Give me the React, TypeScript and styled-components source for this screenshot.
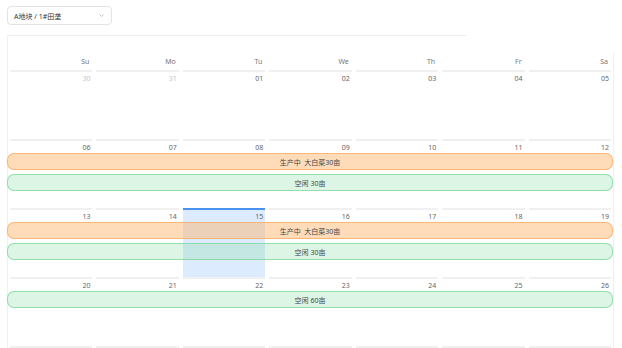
import styled, { createGlobalStyle } from "styled-components";

const GlobalStyle = createGlobalStyle`
  body {
    margin: 0;
    background: #fff;
    font-family: "Noto Sans", "Noto Sans CJK SC", sans-serif;
    color: rgba(0, 0, 0, 0.88);
  }
`;

const Page = styled.div`
  width: 622px;
  height: 348px;
  overflow: hidden;
  padding: 6px 0 0 7px;
  box-sizing: border-box;
`;

const Select = styled.div`
  width: 105px;
  height: 19px;
  box-sizing: border-box;
  border: 1px solid #e3e3e3;
  border-radius: 4px;
  display: flex;
  align-items: center;
  justify-content: space-between;
  padding: 0 6px 0 6px;
  font-size: 7px;
  color: #333;
`;

const Frame = styled.div`
  margin-top: 10px;
  border-left: 1px solid #f0f0f0;
`;

const TopRule = styled.div`
  width: 458px;
  height: 17px;
  border-top: 1px solid #ececec;
  box-sizing: border-box;
`;

const Month = styled.div`
  width: 605px;
  border-right: 1px solid #f0f0f0;
`;

const Grid = styled.div`
  display: grid;
  grid-template-columns: repeat(7, 1fr);
`;

const HeadCell = styled.div`
  height: 18px;
  box-sizing: border-box;
  padding: 2px 5px 0 0;
  line-height: 16px;
  text-align: right;
  font-size: 7px;
  color: #777;
`;

const Week = styled.div`
  display: grid;
  grid-template-columns: repeat(7, 1fr);
  grid-template-rows: 14px 21px 20px 1fr;
  height: 69px;
`;

const Cell = styled.div<{ $col: number; $today?: boolean }>`
  grid-column: ${(p) => p.$col};
  grid-row: 1 / -1;
  margin: 0 2px;
  border-top: 2px solid ${(p) => (p.$today ? "#4a90f0" : "#f0f0f0")};
  background: ${(p) => (p.$today ? "#dcebfd" : "transparent")};
`;

const EdgeCell = styled.div`
  height: 10px;
  margin: 0 2px;
  border-top: 2px solid #f0f0f0;
`;

const DateNum = styled.div<{ $muted?: boolean }>`
  text-align: right;
  padding: 2px 2px 0 0;
  font-size: 7px;
  line-height: 10px;
  color: ${(p) => (p.$muted ? "#c4c4c4" : "#666")};
`;

const Bar = styled.div<{ $kind: "busy" | "idle"; $row: number }>`
  grid-column: 1 / -1;
  grid-row: ${(p) => p.$row};
  align-self: start;
  height: 17px;
  box-sizing: border-box;
  margin-left: -1px;
  border-radius: 7px;
  border: 1px solid
    ${(p) => (p.$kind === "busy" ? "rgba(250, 170, 95, 0.75)" : "rgba(120, 215, 150, 0.75)")};
  background: ${(p) =>
    p.$kind === "busy" ? "rgba(253, 178, 100, 0.45)" : "rgba(150, 225, 175, 0.32)"};
  display: flex;
  align-items: center;
  justify-content: center;
  font-size: 7px;
  color: #444;
  white-space: pre;
`;

const Chevron = () => (
  <svg width="7" height="7" viewBox="0 0 10 10">
    <path d="M2 3.5 L5 6.5 L8 3.5" fill="none" stroke="#aaa" strokeWidth="1" />
  </svg>
);

type Ev = { kind: "busy" | "idle"; text: string };

const days = ["Su", "Mo", "Tu", "We", "Th", "Fr", "Sa"];

const weeks: { dates: string[]; events: Ev[] }[] = [
  { dates: ["30", "31", "01", "02", "03", "04", "05"], events: [] },
  {
    dates: ["06", "07", "08", "09", "10", "11", "12"],
    events: [
      { kind: "busy", text: "生产中  大白菜30亩" },
      { kind: "idle", text: "空闲 30亩" },
    ],
  },
  {
    dates: ["13", "14", "15", "16", "17", "18", "19"],
    events: [
      { kind: "busy", text: "生产中  大白菜30亩" },
      { kind: "idle", text: "空闲 30亩" },
    ],
  },
  {
    dates: ["20", "21", "22", "23", "24", "25", "26"],
    events: [{ kind: "idle", text: "空闲 60亩" }],
  },
];

function App() {
  return (
    <Page>
      <GlobalStyle />
      <Select>
        <span>A地块 / 1#田垄</span>
        <Chevron />
      </Select>
      <Frame>
        <TopRule />
        <Month>
          <Grid>
            {days.map((d) => (
              <HeadCell key={d}>{d}</HeadCell>
            ))}
          </Grid>
          {weeks.map((w, wi) => (
            <Week key={wi}>
              {w.dates.map((d, i) => (
                <Cell key={d + i} $col={i + 1} $today={d === "15"}>
                  <DateNum $muted={wi === 0 && i < 2}>{d}</DateNum>
                </Cell>
              ))}
              {w.events.map((e, ei) => (
                <Bar key={ei} $kind={e.kind} $row={ei + 2}>
                  {e.text}
                </Bar>
              ))}
            </Week>
          ))}
          <Grid>
            {days.map((d) => (
              <EdgeCell key={d} />
            ))}
          </Grid>
        </Month>
      </Frame>
    </Page>
  );
}

export default App;
